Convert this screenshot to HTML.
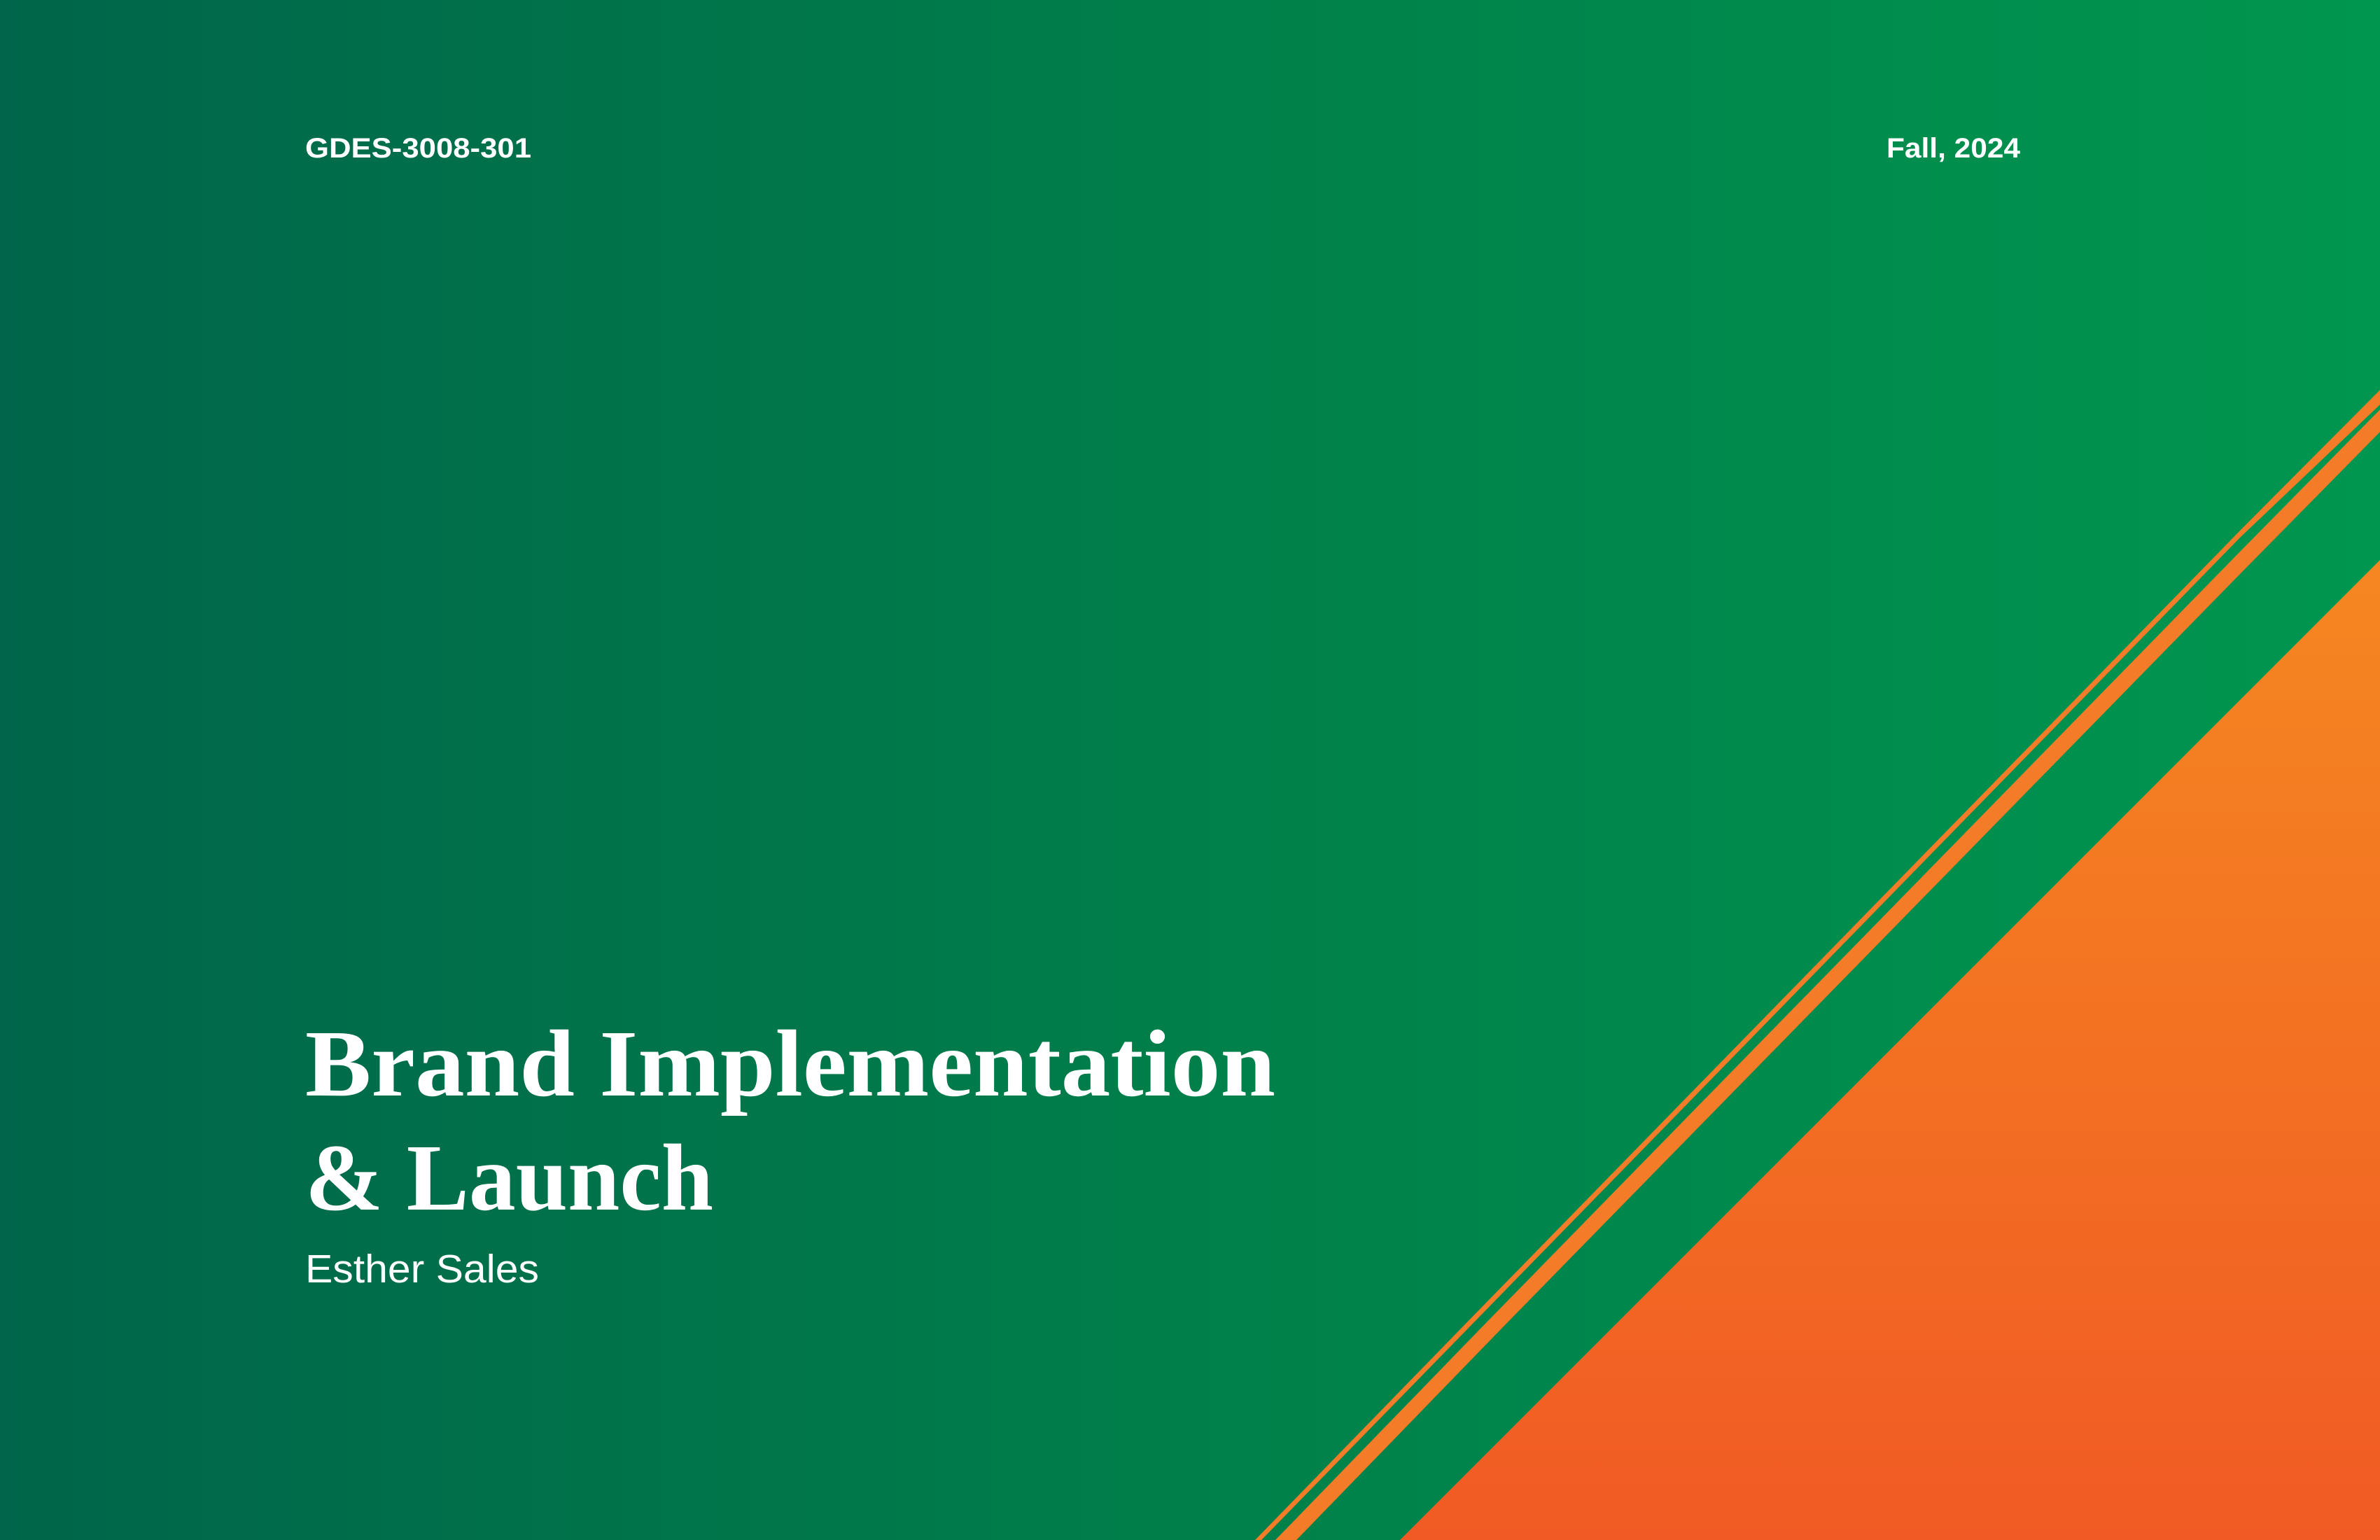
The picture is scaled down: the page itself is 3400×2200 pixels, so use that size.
<!DOCTYPE html>
<html><head><meta charset="utf-8"><style>
html,body{margin:0;padding:0;width:3400px;height:2200px;overflow:hidden;}
svg{display:block}
</style></head><body>
<svg width="3400" height="2200" viewBox="0 0 3400 2200" xmlns="http://www.w3.org/2000/svg">
<defs>
<linearGradient id="bg" x1="0" y1="0" x2="1" y2="0">
<stop offset="0" stop-color="#00654A"/>
<stop offset="0.5" stop-color="#007F4A"/>
<stop offset="1" stop-color="#00964F"/>
</linearGradient>
<linearGradient id="or" x1="0" y1="0" x2="0" y2="1">
<stop offset="0" stop-color="#F58721"/>
<stop offset="1" stop-color="#F15A24"/>
</linearGradient>
</defs>
<rect width="3400" height="2200" fill="url(#bg)"/>
<polygon fill="#F47B28" points="1793,2200 2085,1900 3200,758 3400,557 3400,578 3200,768 2095,1900 1802,2200"/>
<polygon fill="#F47B28" points="1822,2200 2113,1900 3200,788 3400,585 3400,617 3200,820 2143,1900 1852,2200"/>
<polygon fill="url(#or)" points="2000,2200 3400,800 3400,2200"/>
<g fill="#fff" font-family="'Liberation Sans', sans-serif" font-weight="bold" font-size="40">
<text x="436" y="225" textLength="323" lengthAdjust="spacingAndGlyphs">GDES-3008-301</text>
<text x="2695" y="225" textLength="191" lengthAdjust="spacingAndGlyphs">Fall, 2024</text>
</g>
<g fill="#fff" font-family="'Liberation Serif', serif" font-weight="bold" font-size="136">
<text x="436" y="1565" textLength="1386" lengthAdjust="spacingAndGlyphs">Brand Implementation</text>
<text x="436" y="1728" textLength="583" lengthAdjust="spacingAndGlyphs">&amp; Launch</text>
</g>
<text x="436" y="1832" fill="#fff" font-family="'Liberation Sans', sans-serif" font-size="57" textLength="334" lengthAdjust="spacingAndGlyphs">Esther Sales</text>
</svg>
</body></html>
